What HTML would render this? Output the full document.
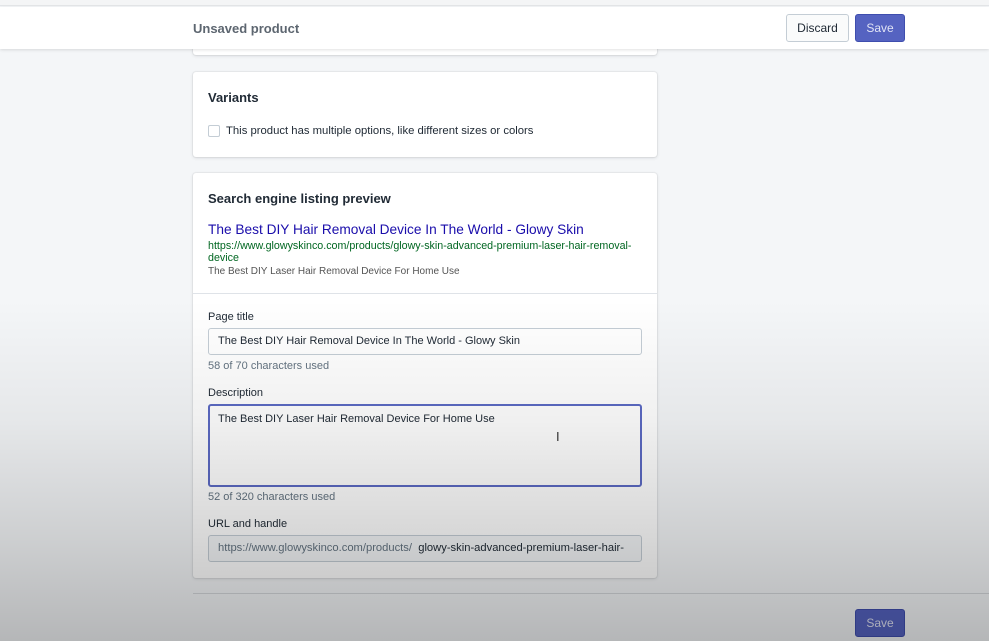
<!DOCTYPE html>
<html><head><meta charset="utf-8"><style>
*{box-sizing:border-box;margin:0;padding:0}
body{width:989px;height:641px;overflow:hidden;background:#f4f6f8;font-family:"Liberation Sans",sans-serif;position:relative;color:#212b36}
.top{position:absolute;left:0;top:0;width:989px;height:6px;background:#f4f5f6;border-bottom:1px solid #e3e5e8}
.bar{position:absolute;left:0;top:7px;width:989px;height:42px;background:#fff;box-shadow:0 1px 3px rgba(0,0,0,.12)}
.bar .t{position:absolute;left:193px;top:14px;font-size:13px;font-weight:bold;color:#5d6670}
.btn{position:absolute;top:7px;height:28px;border-radius:3px;font-size:12px;text-align:center;line-height:26px}
.disc{left:786px;width:63px;background:#fafbfb;border:1px solid #c4cdd5;color:#212b36}
.save{left:855px;width:50px;background:#5563c1;border:1px solid #3f4eae;color:#e1e4f5}
.card{position:absolute;left:193px;width:464px;background:#fff;box-shadow:0 0 0 1px rgba(63,63,68,.05),0 1px 3px rgba(63,63,68,.15);border-radius:3px}
h2{font-size:13px;font-weight:bold;position:absolute;left:15px}
.abs{position:absolute}
.lbl{position:absolute;left:15px;font-size:11px;color:#212b36}
.help{position:absolute;left:15px;font-size:11px;color:#637381}
.inp{position:absolute;left:15px;width:434px;border:1px solid #c4cdd5;border-radius:3px;background:#fff;font-size:11px;padding-left:9px}
.shade{position:absolute;left:0;top:0;width:989px;height:641px;pointer-events:none;background:linear-gradient(to bottom,rgba(0,0,0,0) 0,rgba(0,0,0,0) 300px,rgba(0,0,0,.06) 420px,rgba(0,0,0,.16) 540px,rgba(0,0,0,.26) 641px)}
</style></head><body>
<div class="card" style="top:40px;height:15px"></div>
<div class="card" style="top:72px;height:85px">
 <h2 style="top:18px">Variants</h2>
 <div class="abs" style="left:15px;top:53px;width:12px;height:12px;border:1px solid #c4cdd5;border-radius:2px"></div>
 <div class="abs" style="left:33px;top:53px;font-size:11.3px">This product has multiple options, like different sizes or colors</div>
</div>
<div class="card" style="top:173px;height:405px">
 <h2 style="top:18px">Search engine listing preview</h2>
 <div class="abs" style="left:15px;top:49px;font-size:13.7px;color:#1a0dab">The Best DIY Hair Removal Device In The World - Glowy Skin</div>
 <div class="abs" style="left:15px;top:67px;width:430px;font-size:10.7px;line-height:12px;color:#006621">https://www.glowyskinco.com/products/glowy-skin-advanced-premium-laser-hair-removal-device</div>
 <div class="abs" style="left:15px;top:93px;font-size:10px;color:#545454">The Best DIY Laser Hair Removal Device For Home Use</div>
 <div class="abs" style="left:0;top:120px;width:464px;border-top:1px solid #dfe3e8"></div>
 <div class="lbl" style="top:138px">Page title</div>
 <div class="inp" style="top:155px;height:27px;line-height:25px">The Best DIY Hair Removal Device In The World - Glowy Skin</div>
 <div class="help" style="top:187px">58 of 70 characters used</div>
 <div class="lbl" style="top:214px">Description</div>
 <div class="inp" style="top:231px;height:83px;border:2px solid #5c6ac4;padding-left:8px;padding-top:7px">The Best DIY Laser Hair Removal Device For Home Use</div>
 <div class="abs" style="left:363px;top:256px;font-size:13px;color:#333">I</div>
 <div class="help" style="top:318px">52 of 320 characters used</div>
 <div class="lbl" style="top:345px">URL and handle</div>
 <div class="inp" style="top:362px;height:27px;line-height:25px;background:#f4f6f8;padding-left:9px;white-space:nowrap;overflow:hidden;font-size:11.2px"><span style="color:#637381">https://www.glowyskinco.com/products/</span>&nbsp;&nbsp;glowy-skin-advanced-premium-laser-hair-</div>
</div>
<div class="abs" style="left:193px;top:593px;width:796px;border-top:1px solid #d5d8dc"></div>
<div class="btn save" style="top:609px;height:28px">Save</div>
<div class="top"></div>
<div class="bar"><div class="t">Unsaved product</div>
 <div class="btn disc">Discard</div><div class="btn save">Save</div></div>
<div class="shade"></div>
</body></html>
